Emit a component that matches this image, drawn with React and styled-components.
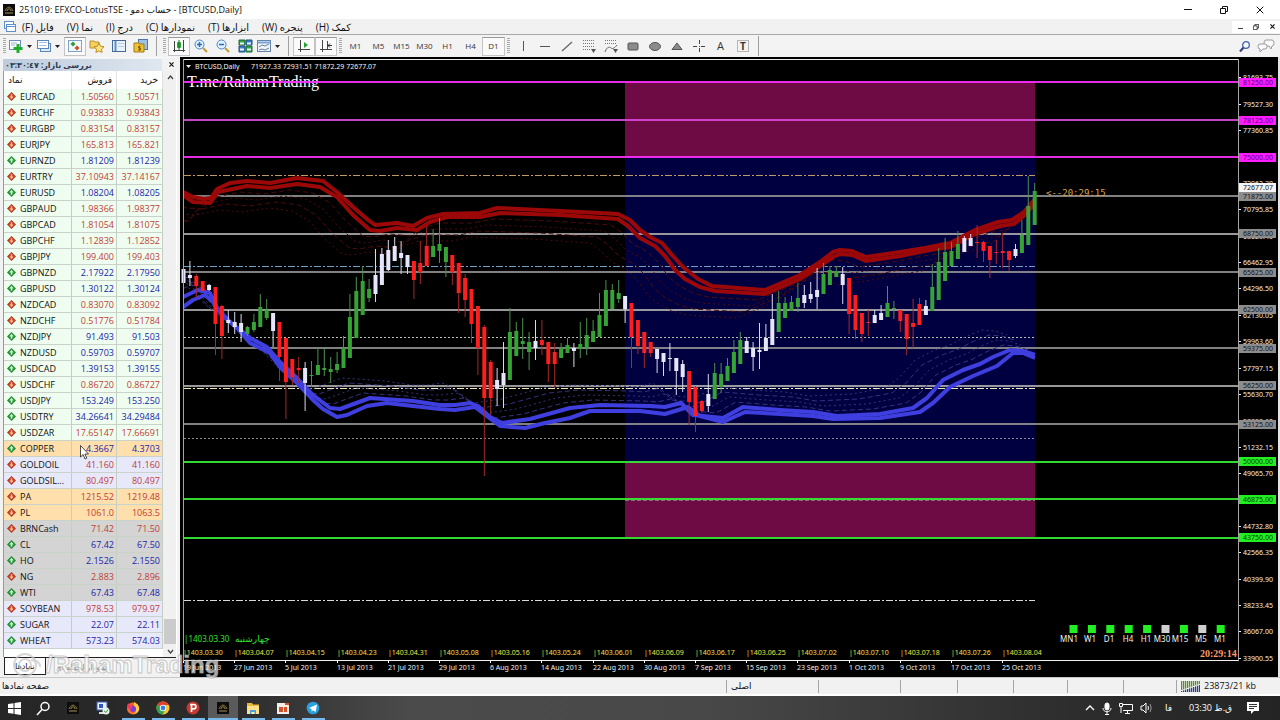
import React from "react";
import styled, { createGlobalStyle, css } from "styled-components";

const GlobalStyle = createGlobalStyle`
  *, *::before, *::after { box-sizing: border-box; }
  html, body { margin: 0; padding: 0; }
  body {
    font-family: "Open Sans", "DejaVu Sans", sans-serif;
    font-size: 9px;
    line-height: 12px;
    color: #111;
    background: #f0f0f0;
  }
  button { font: inherit; color: inherit; border: 0; background: none; padding: 0; margin: 0; }
  svg { display: block; flex: none; }
`;

/* ---------- window shell ---------- */
const Window = styled.div`
  position: relative;
  display: flex;
  flex-direction: column;
  min-height: 100vh;
  overflow: hidden;
`;
const TitleBar = styled.header`
  display: flex;
  align-items: center;
  justify-content: space-between;
  height: 19px;
  padding: 0 15px 0 2px;
  background: #fff;
`;
const TitleText = styled.h1`
  display: flex;
  align-items: center;
  gap: 3px;
  margin: 0;
  font-size: 9px;
  font-weight: 400;
  line-height: 14px;
  white-space: pre;
`;
const WindowControls = styled.div`
  display: flex;
  gap: 26px;
`;
const ControlButton = styled.button`
  display: grid;
  place-items: center;
  width: ${(p) => (p.$small ? 16 : 10)}px;
  height: 12px;
  background: ${(p) => (p.$small ? "#fff" : "none")};
`;
const MenuBar = styled.nav`
  display: flex;
  align-items: center;
  height: 16px;
  padding: 0 0 0 3px;
  background: #f1f1f1;
  border-bottom: 1px solid #a8a8a8;
`;
const MenuIcon = styled.span`
  width: 19px;
`;
const MenuItems = styled.div`
  display: flex;
  flex: 1;
  gap: 13px;
`;
const MenuItem = styled.button`
  font-size: 10px;
  line-height: 12px;
  white-space: nowrap;
`;
const MdiControls = styled.div`
  display: flex;
`;

/* ---------- toolbar ---------- */
const ToolBar = styled.div`
  display: flex;
  align-items: center;
  height: 22px;
  padding: 0 3px 0 1px;
  background: #f3f3f3;
`;
const Grip = styled.span`
  width: 3px;
  height: 16px;
  margin: 0 2px;
  background: repeating-linear-gradient(#a9a9a9 0 1px, #f3f3f3 1px 2px);
`;
const Separator = styled.span`
  width: 1px;
  height: 20px;
  margin: 0 4px;
  background: #a0a0a0;
`;
const Tool = styled.button`
  display: flex;
  align-items: center;
  justify-content: ${(p) => (p.$menu ? "flex-start" : "center")};
  gap: 3px;
  width: ${(p) => (p.$menu ? 28 : p.$period ? 23 : 22)}px;
  height: 19px;
  font-size: 8px;
  color: #333;
  ${(p) =>
    p.$pressed &&
    css`
      background: #fafafa;
      border: 1px solid #c4c4c4;
      border-top-color: #999;
    `}
`;
const ToolSpacer = styled.span`
  flex: 1;
`;

/* ---------- market watch ---------- */
const Main = styled.main`
  display: flex;
  flex: 1;
  padding-right: 2px;
  background: #e4e4e4;
`;
const Watch = styled.aside`
  display: flex;
  flex-direction: column;
  flex: none;
  width: 180px;
  padding: 0 3px;
  background: #f2f2f2;
`;
const WatchHeader = styled.div`
  display: flex;
  align-items: center;
  justify-content: space-between;
  height: 14px;
  padding: 0 1px 0 2px;
  border-top: 1px solid #f8f8f8;
`;
const WatchTitle = styled.h2`
  flex: 1;
  margin: 0 4px 0 -2px;
  padding: 0 2px;
  font-size: 8px;
  font-weight: 700;
  line-height: 12px;
  text-align: left;
  color: #2b3a4c;
  background: linear-gradient(90deg, #bccbdd, #dfe7f0);
`;
const WatchBody = styled.div`
  display: flex;
  flex: 1;
  background: #fff;
  border-left: 1px solid #999;
`;
const Quotes = styled.table`
  flex: none;
  align-self: flex-start;
  width: 159px;
  table-layout: fixed;
  border-collapse: separate;
  border-spacing: 0;
`;
const HeadCell = styled.th`
  height: 18px;
  padding: 0 4px;
  font-size: 9px;
  font-weight: 400;
  line-height: 12px;
  text-align: ${(p) => (p.$symbol ? "left" : "right")};
  border-right: 1px solid #e2e2e2;
  background: #fff;
`;
const QuoteRow = styled.tr`
  background: ${(p) => p.$tint};
`;
const SymbolCell = styled.th`
  height: 16px;
  padding: 0 0 0 3px;
  font-weight: 400;
  line-height: 15px;
  text-align: left;
  white-space: nowrap;
  border-right: 1px solid #c4cfc4;
  border-bottom: 1px solid #c9d3c9;
`;
const SymbolName = styled.span`
  display: flex;
  align-items: center;
  gap: 4px;
`;
const PriceCell = styled.td`
  height: 16px;
  padding: 0 2px 0 0;
  line-height: 15px;
  text-align: right;
  color: ${(p) => (p.$up ? "#2323a8" : "#bf3d37")};
  border-right: 1px solid #c4cfc4;
  border-bottom: 1px solid #c9d3c9;
`;
const ScrollBar = styled.div`
  display: flex;
  flex-direction: column;
  align-items: center;
  flex: 1;
  padding: 4px 0 3px;
  background: linear-gradient(90deg, #f0f0f0 0 13px, #fff 13px);
`;
const ScrollTrack = styled.div`
  display: flex;
  flex: 1;
  flex-direction: column;
  justify-content: flex-end;
  width: 12px;
  padding-bottom: 5px;
`;
const ScrollThumb = styled.div`
  height: 25px;
  background: #cbcbcb;
`;
const Tabs = styled.div`
  display: flex;
  height: 19px;
  margin: 0 1px 1px;
  border-top: 1px solid #222;
`;
const Tab = styled.button`
  height: 17px;
  padding: 0 10px;
  font-size: 8px;
  color: ${(p) => (p.$active ? "#111" : "#888")};
  ${(p) =>
    p.$active &&
    css`
      background: #fff;
      border: 1px solid #222;
      border-top: 0;
    `}
`;

/* ---------- chart ---------- */
const Chart = styled.section`
  display: flex;
  flex: 1;
  min-width: 0;
  background: #000;
`;
const Plot = styled.svg`
  flex: 1;
  min-width: 0;
  height: 620px;
  font-family: "Noto Sans", "DejaVu Sans", sans-serif;
`;
const PriceAxis = styled.svg`
  width: 40px;
  height: 620px;
  font-family: "Noto Sans", sans-serif;
  font-size: 7px;
`;

/* ---------- status bar and taskbar ---------- */
const StatusBar = styled.footer`
  display: flex;
  align-items: center;
  height: 19px;
  padding-left: 2px;
  background: #f1f1f1;
  border-top: 1px solid #c8c8c8;
  border-bottom: 2px solid #fff;
`;
const StatusMain = styled.span`
  flex: 1;
`;
const StatusCell = styled.span`
  display: flex;
  align-items: center;
  gap: 4px;
  width: ${(p) => p.$width}px;
  height: 13px;
  padding-left: 4px;
  border-left: 1px solid #a5a5a5;
`;
const TaskBar = styled.footer`
  display: flex;
  justify-content: space-between;
  height: 24px;
  background: linear-gradient(90deg, #262626, #2b2b2b 18%, #4b4b4b 32%, #484848 55%, #2c2c2c 85%, #242424);
`;
const TaskApps = styled.div`
  display: flex;
`;
const TaskButton = styled.button`
  display: grid;
  place-items: center;
  width: ${(p) => (p.$start ? 28 : 30)}px;
  height: 24px;
  background: ${(p) => (p.$active ? "#5a5a5a" : "none")};
  ${(p) =>
    p.$open &&
    css`
      background-image: linear-gradient(#76b9ed, #76b9ed);
      background-size: ${p.$active ? 30 : 23}px 2px;
      background-position: center bottom;
      background-repeat: no-repeat;
    `}
`;
const Tray = styled.div`
  display: flex;
  align-items: center;
  gap: 7px;
  padding-right: 20px;
  color: #fff;
`;
const TrayText = styled.span`
  padding: 0 ${(p) => (p.$wide ? 7 : 5)}px 0 5px;
  white-space: nowrap;
`;

/* ---------- overlays ---------- */
const Watermark = styled.div`
  position: absolute;
  left: 10px;
  top: 650px;
  display: flex;
  align-items: center;
  font: 700 24px/30px "Liberation Sans", sans-serif;
  color: rgba(255, 255, 255, 0.66);
  -webkit-text-stroke: 1px rgba(165, 165, 165, 0.6);
  pointer-events: none;
`;
const Pointer = styled.div`
  position: absolute;
  left: 80px;
  top: 445px;
  pointer-events: none;
`;

/* ---------- data ---------- */
const FX = "#effdf0";
const METAL = "#ffdfac";
const GOLD = "#e8e8fb";
const ENERGY = "#d4d4d4";

const quotes = [
  ["EURCAD", "1.50560", "1.50571", 0, FX],
  ["EURCHF", "0.93833", "0.93843", 0, FX],
  ["EURGBP", "0.83154", "0.83157", 0, FX],
  ["EURJPY", "165.813", "165.821", 0, FX],
  ["EURNZD", "1.81209", "1.81239", 1, FX],
  ["EURTRY", "37.10943", "37.14167", 0, FX],
  ["EURUSD", "1.08204", "1.08205", 1, FX],
  ["GBPAUD", "1.98366", "1.98377", 0, FX],
  ["GBPCAD", "1.81054", "1.81075", 0, FX],
  ["GBPCHF", "1.12839", "1.12852", 0, FX],
  ["GBPJPY", "199.400", "199.403", 0, FX],
  ["GBPNZD", "2.17922", "2.17950", 1, FX],
  ["GBPUSD", "1.30122", "1.30124", 1, FX],
  ["NZDCAD", "0.83070", "0.83092", 0, FX],
  ["NZDCHF", "0.51776", "0.51784", 0, FX],
  ["NZDJPY", "91.493", "91.503", 1, FX],
  ["NZDUSD", "0.59703", "0.59707", 1, FX],
  ["USDCAD", "1.39153", "1.39155", 1, FX],
  ["USDCHF", "0.86720", "0.86727", 0, FX],
  ["USDJPY", "153.249", "153.250", 1, FX],
  ["USDTRY", "34.26641", "34.29484", 1, FX],
  ["USDZAR", "17.65147", "17.66691", 0, FX],
  ["COPPER", "4.3667", "4.3703", 1, METAL],
  ["GOLDOIL", "41.160", "41.160", 0, GOLD],
  ["GOLDSIL...", "80.497", "80.497", 0, GOLD],
  ["PA", "1215.52", "1219.48", 0, METAL],
  ["PL", "1061.0", "1063.5", 0, METAL],
  ["BRNCash", "71.42", "71.50", 0, ENERGY],
  ["CL", "67.42", "67.50", 1, ENERGY],
  ["HO", "2.1526", "2.1550", 1, ENERGY],
  ["NG", "2.883", "2.896", 0, ENERGY],
  ["WTI", "67.43", "67.48", 1, ENERGY],
  ["SOYBEAN", "978.53", "979.97", 0, GOLD],
  ["SUGAR", "22.07", "22.11", 1, GOLD],
  ["WHEAT", "573.23", "574.03", 1, GOLD],
];

/* kind, high, body top, body bottom, low */
const candles = `
W269,269,283,288 W261,275,278,286 R274,276,286,298 R281,281,291,291 W284,285,290,291 R287,287,324,355
R305,306,336,359 W310,320,323,333 W312,322,327,334 W314,323,332,342 G326,327,334,336 G314,322,330,332
G294,307,327,327 G299,310,318,320 W313,313,331,347 R322,322,357,381 R338,338,382,419 R359,359,377,385
R357,368,370,383 W362,368,383,411 G361,375,376,387 G348,365,375,375 G348,368,370,376 G357,369,372,383
G352,364,370,373 G336,348,368,368 G294,317,358,358 G277,291,338,338 G266,281,315,315 G279,289,298,302
W249,275,294,302 W248,254,285,285 W240,250,270,271 W237,246,261,261 W241,253,258,274 W255,255,267,274
R261,261,280,299 R241,263,272,284 R226,246,266,266 G229,246,257,257 G218,244,251,263 G247,247,262,277
R255,255,272,285 R263,263,293,313 R274,278,300,317 R289,289,324,343 R306,306,348,375 R325,327,398,476
R360,362,398,415 W368,380,389,406 W342,373,385,408 G308,332,380,380 G322,331,356,356 G318,341,344,359
G332,342,352,370 W320,341,348,360 R320,340,345,355 R342,342,364,382 R343,352,364,388 G343,348,358,358
G338,345,353,353 W343,348,351,367 G322,344,349,358 G318,335,348,355 G320,331,342,342 G293,315,337,337
G280,290,326,326 G284,290,309,309 G280,293,299,303 W296,296,309,323 R303,303,337,368 R320,320,346,354
R332,332,353,368 R342,342,353,357 W349,349,359,373 W353,353,362,376 W343,358,359,371 W358,358,371,395
W360,364,377,392 R371,371,402,425 R386,387,416,432 R400,401,411,413 W374,394,406,412 G363,373,399,399
G363,374,387,393 G358,366,381,381 G340,352,373,373 G332,340,364,364 W337,341,353,353 W342,348,357,371
W323,350,352,369 W324,338,351,351 W294,319,345,345 G291,303,332,332 G297,303,318,318 G296,302,311,311
G283,298,307,312 W285,295,303,308 W282,294,299,303 W268,290,297,309 G263,274,294,294 G266,270,285,285
G266,271,277,277 W267,274,285,304 R278,278,314,334 R295,295,330,339 R313,313,334,342 R310,322,323,336
W310,315,323,323 W305,313,320,320 G286,303,317,317 G301,308,309,319 R310,310,321,332 R314,314,339,355
R299,323,327,348 R298,304,325,325 W300,306,315,315 G264,287,311,311 G248,262,300,300 G238,252,281,281
G242,251,266,266 G231,244,259,259 W236,238,252,252 W234,238,246,246 R225,242,243,258 R241,242,251,262
R246,246,260,278 R240,252,253,264 R233,251,253,268 R251,251,260,271 W244,249,256,258 G220,235,253,253
G176,206,245,245 G183,191,225,225`
  .trim()
  .split(/\s+/)
  .map((item) => [item[0], ...item.slice(1).split(",").map(Number)]);
const candleFill = { W: "#e6e6fa", R: "#fb1f1f", G: "#37a337" };
const wickFill = { W: "#d8d8ee", R: "#a52a2a", G: "#4f8f4f" };

const redUpper =
  "183,192 193,197 204,199 211,198 217,189 230,183 247,181 270,183 297,178 323,181 337,192 353,207 367,219 375,225 397,223 413,226 427,218 443,214 480,213 497,208 540,210 600,213 618,214 630,220 640,230 650,237 662,243 672,255 683,267 698,279 712,286 765,290 800,275 820,262 833,252 840,250 852,251 866,257 900,252 925,248 950,243 975,230 998,222 1012,220 1024,212 1034,200";
const redLower =
  "183,195 193,202 210,203 218,192 247,186 270,188 297,184 320,187 337,197 353,215 370,230 380,231 397,228 417,230 430,222 447,217 480,217 500,213 560,215 618,219 628,226 640,238 655,246 665,256 675,270 685,279 700,287 715,291 765,294 800,279 820,266 833,257 840,254 852,255 866,261 900,256 930,250 950,247 975,234 1000,226 1014,224 1026,214 1034,204";
const blueUpper =
  "183,297 198,290 210,293 217,308 230,322 250,338 267,347 280,362 297,378 313,395 330,408 340,409 370,398 413,401 440,405 455,405 470,403 478,406 490,417 502,423 530,419 570,408 600,405 650,406 665,407 681,403 693,415 723,418 743,407 780,410 813,412 837,416 880,414 913,408 927,398 943,380 963,370 980,364 993,357 1010,350 1023,351 1035,355";
const blueLower =
  "183,307 193,300 205,295 213,302 222,315 237,328 250,343 270,353 280,367 297,383 313,400 323,409 337,417 347,415 367,406 387,403 413,406 440,409 455,410 475,407 484,414 500,426 525,428 545,423 570,418 590,411 640,411 665,414 688,407 700,416 723,422 745,412 780,414 813,416 833,419 880,418 920,412 933,403 950,387 973,376 997,366 1013,353 1023,353 1035,358";

const levels = [
  [82, "#ff30ff"], [120, "#d848d8"], [157, "#ff30ff"],
  [196, "#8f8f8f"], [234, "#a8a8a8"], [272, "#8f8f8f"], [310, "#a8a8a8"], [348, "#8f8f8f"], [386, "#a8a8a8"], [424, "#8f8f8f"],
  [462, "#35f035"], [499, "#35f035"], [538, "#35f035"],
];
const dashes = [
  [176, "#c09a60", "7 2 2 2"],
  [267, "#6f9fc4", "7 2 2 2"],
  [338, "#b9c2ae", "2 2"],
  [389, "#efe9b8", "7 2 2 2"],
  [439, "#8b8b94", "2 2"],
  [501, "#8a6a78", "4 2"],
  [601, "#d8d8d8", "7 2 2 2"],
];
const prices = [
  [77, "81693.75"], [104, "79527.30"], [130, "77360.85"], [183, "72962.30"], [209, "70795.85"], [236, "68629.40"],
  [262, "66462.95"], [288, "64296.50"], [315, "62130.05"], [341, "59963.60"], [368, "57797.15"], [394, "55630.70"],
  [421, "53398.60"], [447, "51232.15"], [473, "49065.70"], [526, "44732.80"], [552, "42566.35"], [579, "40399.90"],
  [605, "38233.45"], [631, "36067.00"], [658, "33900.55"],
];
const priceTags = [
  [82, "81250.00", "#ff1cff", "#6a006a"], [120, "78125.00", "#ff1cff", "#6a006a"], [157, "75000.00", "#ff1cff", "#6a006a"],
  [196, "71875.00", "#8c8c8c", "#111"], [187, "72677.07", "#f4f4f4", "#111"], [233, "68750.00", "#8c8c8c", "#111"],
  [272, "65625.00", "#8c8c8c", "#111"], [309, "62500.00", "#8c8c8c", "#111"], [348, "59375.00", "#8c8c8c", "#111"],
  [385, "56250.00", "#8c8c8c", "#111"], [424, "53125.00", "#8c8c8c", "#111"], [461, "50000.00", "#22ee22", "#063f06"],
  [499, "46875.00", "#22ee22", "#063f06"], [537, "43750.00", "#22ee22", "#063f06"],
];
const dates = [
  ["1403.03.30", "19 Jun 2013"], ["1403.04.07", "27 Jun 2013"], ["1403.04.15", "5 Jul 2013"], ["1403.04.23", "13 Jul 2013"],
  ["1403.04.31", "21 Jul 2013"], ["1403.05.08", "29 Jul 2013"], ["1403.05.16", "6 Aug 2013"], ["1403.05.24", "14 Aug 2013"],
  ["1403.06.01", "22 Aug 2013"], ["1403.06.09", "30 Aug 2013"], ["1403.06.17", "7 Sep 2013"], ["1403.06.25", "15 Sep 2013"],
  ["1403.07.02", "23 Sep 2013"], ["1403.07.10", "1 Oct 2013"], ["1403.07.18", "9 Oct 2013"], ["1403.07.26", "17 Oct 2013"],
  ["1403.08.04", "25 Oct 2013"],
];
const frames = [
  ["MN1", -169, 1], ["W1", -148, 1], ["D1", -129, 1], ["H4", -110, 1], ["H1", -92, 1], ["M30", -76, 0], ["M15", -58, 1],
  ["M5", -37, 0], ["M1", -18, 1],
];

/* ---------- icons ---------- */
const AppMark = ({ size = 14 }) => (
  <svg width={size} height={size} viewBox="0 0 14 14">
    <rect x="1" y="1" width="12" height="12" fill="#0c0c0c" />
    <path d="M3 8c1-3 2-3 4-4 2 1 3 1 4 4" fill="none" stroke="#8d7a3c" />
    <path d="M5 8c0-2 1-2 2-2s2 0 2 2M3 10h8" fill="none" stroke="#a8924c" />
  </svg>
);
const Arrow = ({ up }) => (
  <svg width="9" height="9" viewBox="0 0 8 8">
    <path d="M4 0l4 4-4 4-4-4z" fill={up ? "#1f8f33" : "#b83a22"} />
    <path d={up ? "M4 1.500L6 4H4.700V6H3.300V4H2z" : "M4 6.500L2 4H3.300V2H4.700V4H6z"} fill={up ? "#c9f2cd" : "#ffb98a"} />
  </svg>
);
const Icon = ({ children }) => (
  <svg width="16" height="16" viewBox="0 0 16 16" fill="none">
    {children}
  </svg>
);
const Caret = () => (
  <svg width="5" height="3" viewBox="0 0 5 3"><path d="M0 0h5L2.500 3z" fill="#222" /></svg>
);
const icons = {
  newChart: (
    <Icon>
      <rect x="1.500" y="2.500" width="11" height="9" fill="#fff" stroke="#6f8fb8" />
      <path d="M3 5h6M3 7h4" stroke="#9bb3cc" />
      <path d="M10 6v9M5.500 10.500h9" stroke="#1fae2b" strokeWidth="3" />
    </Icon>
  ),
  profiles: (
    <Icon>
      <rect x="4.500" y="5.500" width="10" height="8" fill="#dcebfa" stroke="#5b86b8" />
      <rect x="1.500" y="2.500" width="11" height="8" fill="#fff" stroke="#5b86b8" />
      <path d="M3 4.500h8M3 7.500h7" stroke="#9fc0e2" />
    </Icon>
  ),
  watch: (
    <Icon>
      <rect x="1.500" y="2.500" width="13" height="11" fill="#f3f8fd" stroke="#7fa3cb" />
      <path d="M6 3.500l2.500 2.500L6 8.500 3.500 6z" fill="#2e9b3a" />
      <path d="M10 7.500l2.500 2.500-2.500 2.500L7.500 10z" fill="#c9532b" />
    </Icon>
  ),
  navigator: (
    <Icon>
      <path d="M1 3h4l1 1h4v6H1z" fill="#f4cf62" stroke="#b98f22" />
      <path d="M10 5l1.600 3.200 3.400.5-2.500 2.400.6 3.400-3.100-1.600-3.100 1.600.6-3.400L5 8.700l3.400-.5z" fill="#ffe27a" stroke="#b98f22" />
    </Icon>
  ),
  data: (
    <Icon>
      <rect x="1.500" y="2.500" width="13" height="11" fill="#eaf3fb" stroke="#456a96" />
      <path d="M4.500 3v10" stroke="#5c8ec6" strokeWidth="2" />
      <path d="M7 5.500h6M7 8.500h6" stroke="#b7cde3" />
    </Icon>
  ),
  tester: (
    <Icon>
      <rect x="5.500" y="1.500" width="9" height="10" fill="#9cc1e6" stroke="#4d76a3" />
      <path d="M1 5h5l1 1h4v8H1z" fill="#f0c136" stroke="#9d7a14" />
      <path d="M7.500 8.500H5.500v1.500h2v2h-2.500M6.500 7.500v5.500" stroke="#8a6405" />
    </Icon>
  ),
  bars: (
    <Icon>
      <path d="M3.500 3v11M2 12.500h12M12.500 2v12" stroke="#444" />
      <rect x="6" y="4" width="4" height="6" rx="1" fill="#25a934" />
      <path d="M8 2v10" stroke="#147a20" />
    </Icon>
  ),
  zoomIn: (
    <Icon>
      <path d="M10 10l4 4" stroke="#c59a2d" strokeWidth="2" />
      <circle cx="6.500" cy="6.500" r="4.500" fill="#e2f1ff" stroke="#4b86c4" />
      <path d="M4 6.500h5M6.500 4v5" stroke="#2b6bb0" strokeWidth="1.500" />
    </Icon>
  ),
  zoomOut: (
    <Icon>
      <path d="M10 10l4 4" stroke="#c59a2d" strokeWidth="2" />
      <circle cx="6.500" cy="6.500" r="4.500" fill="#e2f1ff" stroke="#4b86c4" />
      <path d="M4 6.500h5" stroke="#2b6bb0" strokeWidth="1.500" />
    </Icon>
  ),
  tile: (
    <Icon>
      <path d="M2 2h6v5H2zM9 8h6v6H9z" fill="#37a34a" stroke="#1a6a2c" />
      <path d="M9 2h6v5H9zM2 8h6v6H2z" fill="#3f7fc0" stroke="#1f4d80" />
      <path d="M3 5.500h4M10 5.500h4M3 11.500h4M10 11.500h4" stroke="#e7f3ff" strokeWidth="2" />
    </Icon>
  ),
  template: (
    <Icon>
      <rect x="1.500" y="2.500" width="13" height="11" fill="#eef4fa" stroke="#6386ad" />
      <path d="M2 4.500h12" stroke="#7ba4d0" strokeWidth="2" />
      <path d="M3 9l3-2 3 1 4-2M3 12l3-1 3 1 4-2" stroke="#6d8091" />
    </Icon>
  ),
  scroll: (
    <Icon>
      <path d="M4.500 2v12M2 11.500h12" stroke="#444" />
      <path d="M8 4l4 3-4 3z" fill="#27a135" />
    </Icon>
  ),
  shift: (
    <Icon>
      <path d="M4.500 2v12M2 11.500h12M9.500 3v8" stroke="#444" />
      <path d="M14 7.500H10M10 7.500l2-2M10 7.500l2 2" stroke="#333" />
    </Icon>
  ),
  vline: <Icon><path d="M8.500 3v10" stroke="#555" /></Icon>,
  hline: <Icon><path d="M3 8.500h10" stroke="#555" /></Icon>,
  trend: <Icon><path d="M3 13L13 4" stroke="#666" strokeWidth="1.300" /></Icon>,
  fibo: (
    <Icon>
      <path d="M2 2.500h12M2 5.500h12M2 8.500h12M2 11.500h8" stroke="#777" strokeDasharray="1 1" />
      <path d="M10 11h5l-2.500 4z" fill="#555" />
    </Icon>
  ),
  fiboArc: (
    <Icon>
      <path d="M2 2.500h12M2 5.500h12" stroke="#777" strokeDasharray="1 1" />
      <path d="M2 14c2-6 5-5 6-4s3 1 6-3" stroke="#666" />
      <path d="M10 11h5l-2.500 4z" fill="#555" />
    </Icon>
  ),
  rect: <Icon><rect x="3" y="5" width="10" height="7" rx="1" fill="#8b8b8b" stroke="#555" /></Icon>,
  ellipse: <Icon><ellipse cx="8" cy="8.500" rx="5.500" ry="4" fill="#8b8b8b" stroke="#555" /></Icon>,
  triangle: <Icon><path d="M8 5l5 6.500H3z" fill="#8b8b8b" stroke="#555" /></Icon>,
  cross: <Icon><path d="M2 8.500h4M10 8.500h4M8.500 2v4M8.500 10v4M8 8.500h1" stroke="#444" /></Icon>,
};
const drawTools = ["vline", "hline", "trend", "fibo", "fiboArc", "rect", "ellipse", "triangle", "cross"];

const Restore = ({ size }) => (
  <svg width={size} height={size} viewBox="0 0 8 8" fill="none" stroke="currentColor">
    <path d="M.500 2.500h5v5h-5zM2.500 2.500v-2h5v5h-2" />
  </svg>
);
const Cross = ({ size, bold }) => (
  <svg width={size} height={size} viewBox="0 0 8 8" stroke="currentColor" strokeWidth={bold ? 1.8 : 1}>
    <path d="M.700.700l6.600 6.600M7.300.700L.700 7.300" />
  </svg>
);

const taskApps = [
  ["Search", false, (
    <svg width="15" height="15" viewBox="0 0 15 15" fill="none" stroke="#fff" strokeWidth="1.500"><circle cx="9" cy="5.500" r="4" /><path d="M6 8.500L1 14" /></svg>
  )],
  ["MetaTrader", false, <AppMark />],
  ["Remote", false, (
    <svg width="14" height="14" viewBox="0 0 14 14"><rect x="1" y="1" width="10" height="8" fill="#e8f1ff" stroke="#3c5fb5" /><rect x="3" y="3" width="4" height="4" fill="#2d57c4" /><path d="M3 12h6" stroke="#ddd" strokeWidth="2" /><circle cx="10" cy="10" r="3.500" fill="#e9f5e9" /><path d="M8 10l2 1.500 2-3" fill="none" stroke="#3a9a3a" /></svg>
  )],
  ["Firefox", true, (
    <svg width="14" height="14" viewBox="0 0 14 14"><circle cx="7" cy="7.500" r="6" fill="#ff6a2b" /><path d="M8 1c4 2 6 5 5 8-1 3-4 4-6 4 4-2 4-6 1-8z" fill="#ffcb3a" /><circle cx="7" cy="8" r="3" fill="#7a3be0" /><path d="M1 6c0-2 1-3 1-4l2 2c2-1 4 0 4 1-2 0-3 1-2 3-3 1-4-1-5-2z" fill="#f03a5a" /></svg>
  )],
  ["Chrome", true, (
    <svg width="14" height="14" viewBox="0 0 14 14"><circle cx="7" cy="7" r="6.500" fill="#f7c52d" /><path d="M7 7L1.400 3.700A6.500 6.500 0 0 1 12.700 4H7z" fill="#e2402f" /><path d="M7 7L1.400 3.700A6.500 6.500 0 0 0 6.500 13.500L9.600 8.500z" fill="#2fa34f" /><circle cx="7" cy="7" r="3.200" fill="#fff" /><circle cx="7" cy="7" r="2.400" fill="#3d7de8" /></svg>
  )],
  ["PDF", true, (
    <svg width="14" height="14" viewBox="0 0 14 14"><circle cx="7" cy="7" r="6.500" fill="#c33a30" /><path d="M5.500 11V3.500h2.200a2.200 2.200 0 0 1 0 4.400H5.500M4 3.500h2" fill="none" stroke="#fff" strokeWidth="1.700" /></svg>
  )],
  ["Terminal", true, <AppMark />],
  ["Explorer", true, (
    <svg width="14" height="14" viewBox="0 0 14 14"><path d="M1 2h5l1 1.500h6V13H1z" fill="#e9b93c" /><path d="M1 5h12v8H1z" fill="#ffe08a" /><path d="M4 9h6v4H4z" fill="#4f9fdc" /><path d="M5.500 11h3v2h-3z" fill="#fff0b5" /></svg>
  )],
  ["Recorder", true, (
    <svg width="14" height="14" viewBox="0 0 14 14"><rect x="1" y="2" width="12" height="11" fill="#f5ede8" /><rect x="3" y="6" width="4" height="5" fill="#d5532b" /><rect x="8" y="6" width="3" height="5" fill="#d5532b" /><rect x="9" y="2" width="4" height="2" fill="#d5532b" /></svg>
  )],
  ["Telegram", true, (
    <svg width="14" height="14" viewBox="0 0 14 14"><circle cx="7" cy="7" r="6.300" fill="#2aa1de" /><path d="M3 7l8-3.500L9.600 11 7 9.200 5.700 10.500 5.500 8z" fill="#fff" /></svg>
  )],
];

const toY = (y) => y - 57;

function Band({ points, color, dim, shift }) {
  return (
    <>
      {[1, 2, 3, 4].map((n) => (
        <polyline
          key={n}
          points={points[shift > 0 ? 1 : 0]}
          transform={`translate(${n * -7} ${n * shift})`}
          fill="none"
          stroke={dim}
          strokeDasharray={n % 2 ? "5 3" : "2 3"}
        />
      ))}
      {points.map((line) => (
        <polyline key={line} points={line} fill="none" stroke={color} strokeWidth="4" strokeLinejoin="round" />
      ))}
    </>
  );
}

function ChartPlot() {
  return (
    <Plot role="img" aria-label="BTCUSD daily chart">
      <defs>
        <clipPath id="history"><rect x="183" y="60" width="853" height="600" /></clipPath>
      </defs>
      <text x="7" y={toY(87)} fill="#fff" fontSize="16" fontFamily="Liberation Serif, serif">T.me/RahamTrading</text>
      <g transform="translate(-180 -57)">
        <rect x="625" y="82" width="410" height="75" fill="#6e0a44" />
        <rect x="625" y="157" width="410" height="305" fill="#000040" />
        <rect x="625" y="462" width="410" height="75" fill="#6e0a44" />
        {dashes.map(([y, color, dash]) => (
          <line key={y} x1={y === 501 ? 625 : 184} x2="1035" y1={y - 0.5} y2={y - 0.5} stroke={color} strokeDasharray={dash} />
        ))}
      </g>
      {levels.map(([y, color]) => (
        <line key={y} x1="3" x2="100%" y1={toY(y)} y2={toY(y)} stroke={color} strokeWidth="2" strokeOpacity="0.9" />
      ))}
      <g transform="translate(-180 -57)">
        <g clipPath="url(#history)">
          <Band points={[redUpper, redLower]} color="#9c0808" dim="#4c0c0c" shift={6} />
          <Band points={[blueUpper, blueLower]} color="#3f3fe0" dim="#33337f" shift={-5} />
        </g>
        {candles.map(([kind, high, top, bottom, low], i) => {
          const x = 183.5 + i * 6.4;
          return (
            <g key={i}>
              <rect x={x - 0.5} y={high} width="1" height={low - high} fill={wickFill[kind]} />
              <rect x={x - 2} y={top} width="4" height={bottom - top} fill={candleFill[kind]} />
            </g>
          );
        })}
        <g fontSize="7" fill="#f2f2f2">
          <path d="M186 65h5l-2.500 3z" />
          <text x="195" y="69">BTCUSD,Daily</text>
          <text x="251" y="69">71927.33 72931.51 71872.29 72677.07</text>
        </g>
        <text x="1046" y="196" fill="#d8a24a" fontSize="9" fontFamily="DejaVu Sans Mono, monospace">{"<--20:29:15"}</text>
        <g fill="#2fe02f">
          <text x="184" y="642" fontSize="8">|1403.03.30</text>
          <text x="235" y="642" fontSize="9">چهارشنبه</text>
        </g>
        {dates.map(([jalali, gregorian], i) => {
          const x = 183 + Math.round(i * 51.2);
          return (
            <g key={jalali} fontSize="7">
              <text x={x} y="655" fill="#f2e24a">|{jalali}</text>
              <rect x={x} y="660" width="1" height="3" fill="#fff" />
              <text x={x} y="670" fill="#f2f2f2">{gregorian}</text>
            </g>
          );
        })}
      </g>
      <svg x="100%" overflow="visible">
        {frames.map(([label, x, on], i) => (
          <g key={label}>
            <rect x={i * 18.4 - 168.500} y={toY(625)} width="8" height="8" fill={on ? "#23f023" : "#cfcfcf"} />
            <text x={x} y={toY(642)} fontSize="8" fill="#f2f2f2" textAnchor="middle">{label}</text>
          </g>
        ))}
        <text x="-38" y={toY(657)} fill="#ff9a6a" fontSize="10" fontWeight="700" fontFamily="Liberation Serif, serif">20:29:14</text>
      </svg>
      <rect x="3" y="2" width="100%" height="1" fill="#e8e8e8" />
      <rect x="3" y="603" width="100%" height="1" fill="#f2f2f2" />
      <rect x="3" y="2" width="1" height="602" fill="#a5a5a5" />
    </Plot>
  );
}

function ChartAxis() {
  return (
    <PriceAxis role="img" aria-label="Price axis">
      <rect x="0" y="2" width="1" height="602" fill="#a5a5a5" />
      {prices.map(([y, label]) => (
        <g key={label} fill="#f2f2f2">
          <rect x="1" y={toY(y)} width="2" height="1" />
          <text x="5" y={toY(y + 3)}>{label}</text>
        </g>
      ))}
      {priceTags.map(([y, label, fill, ink]) => (
        <g key={label}>
          <rect x="1" y={toY(y - 4)} width="37" height="9" fill={fill} />
          <text x="5" y={toY(y + 3)} fill={ink}>{label}</text>
        </g>
      ))}
    </PriceAxis>
  );
}

function MarketWatch() {
  return (
    <Watch>
      <WatchHeader>
        <WatchTitle dir="rtl">بررسی بازار: ٠٣:٣٠:٤٧</WatchTitle>
        <ControlButton aria-label="Close panel"><Cross size={5} bold /></ControlButton>
      </WatchHeader>
      <WatchBody>
        <Quotes>
          <colgroup><col width="68" /><col width="45" /><col width="46" /></colgroup>
          <thead>
            <tr>
              <HeadCell $symbol>نماد</HeadCell>
              <HeadCell>فروش</HeadCell>
              <HeadCell>خرید</HeadCell>
            </tr>
          </thead>
          <tbody>
            {quotes.map(([name, bid, ask, up, tint]) => (
              <QuoteRow key={name} $tint={tint}>
                <SymbolCell><SymbolName><Arrow up={up} />{name}</SymbolName></SymbolCell>
                <PriceCell $up={up}>{bid}</PriceCell>
                <PriceCell $up={up}>{ask}</PriceCell>
              </QuoteRow>
            ))}
          </tbody>
        </Quotes>
        <ScrollBar>
          <svg width="7" height="5" viewBox="0 0 7 5" fill="none" stroke="#444" strokeWidth="1.300"><path d="M1 4l2.500-3L6 4" /></svg>
          <ScrollTrack><ScrollThumb /></ScrollTrack>
          <svg width="7" height="5" viewBox="0 0 7 5" fill="none" stroke="#444" strokeWidth="1.300"><path d="M1 1l2.500 3L6 1" /></svg>
        </ScrollBar>
      </WatchBody>
      <Tabs>
        <Tab $active>نمادها</Tab>
        <Tab>نمودار لحظه ای</Tab>
      </Tabs>
    </Watch>
  );
}

export default function App() {
  return (
    <Window>
      <GlobalStyle />
      <TitleBar>
        <TitleText>
          <AppMark />
          <span>251019: EFXCO-LotusTSE - حساب دمو - [BTCUSD,Daily]</span>
        </TitleText>
        <WindowControls>
          <ControlButton aria-label="Minimize"><svg width="8" height="1"><rect width="8" height="1" fill="#111" /></svg></ControlButton>
          <ControlButton aria-label="Restore"><Restore size={8} /></ControlButton>
          <ControlButton aria-label="Close"><Cross size={8} /></ControlButton>
        </WindowControls>
      </TitleBar>
      <MenuBar>
        <MenuIcon>
          <svg width="14" height="12" viewBox="0 0 14 12" fill="#fff" stroke="#5d8fcb"><rect x="1.500" y=".5" width="9" height="7" /><rect x="3.500" y="3.500" width="9" height="7" /><path d="M3.500 5.500h9" /></svg>
        </MenuIcon>
        <MenuItems>
          {["فایل (F)", "نما (V)", "درج (I)", "نمودارها (C)", "ابزارها (T)", "پنجره (W)", "کمک (H)"].map((label) => (
            <MenuItem key={label} dir="rtl">{label}</MenuItem>
          ))}
        </MenuItems>
        <MdiControls>
          <ControlButton $small aria-label="Minimize chart"><svg width="5" height="4"><rect y="3" width="5" height="1" fill="#444" /></svg></ControlButton>
          <ControlButton $small aria-label="Restore chart"><Restore size={6} /></ControlButton>
          <ControlButton $small aria-label="Close chart"><Cross size={5} bold /></ControlButton>
        </MdiControls>
      </MenuBar>
      <ToolBar>
        <Grip />
        <Tool $menu aria-label="New chart">{icons.newChart}<Caret /></Tool>
        <Tool $menu aria-label="Profiles">{icons.profiles}<Caret /></Tool>
        <Tool $pressed aria-label="Market watch">{icons.watch}</Tool>
        <Tool aria-label="Navigator">{icons.navigator}</Tool>
        <Tool aria-label="Data window">{icons.data}</Tool>
        <Tool aria-label="Tester">{icons.tester}</Tool>
        <Separator />
        <Grip />
        <Tool $pressed aria-label="Candles">{icons.bars}</Tool>
        <Tool aria-label="Zoom in">{icons.zoomIn}</Tool>
        <Tool aria-label="Zoom out">{icons.zoomOut}</Tool>
        <Tool aria-label="Tile windows">{icons.tile}</Tool>
        <Tool $menu aria-label="Templates">{icons.template}<Caret /></Tool>
        <Separator />
        <Tool $pressed aria-label="Auto scroll">{icons.scroll}</Tool>
        <Tool $pressed aria-label="Chart shift">{icons.shift}</Tool>
        <Grip />
        {["M1", "M5", "M15", "M30", "H1", "H4", "D1"].map((period) => (
          <Tool key={period} $period $pressed={period === "D1"}>{period}</Tool>
        ))}
        <Grip />
        {drawTools.map((name) => (
          <Tool key={name} aria-label={name}>{icons[name]}</Tool>
        ))}
        <Tool aria-label="Text"><Icon><text x="4" y="12" fontSize="11" fill="#333">A</text></Icon></Tool>
        <Tool aria-label="Label"><Icon><rect x="2.500" y="2.500" width="11" height="11" stroke="#777" strokeDasharray="1 1" /><text x="5" y="12" fontSize="10" fontWeight="700" fill="#333">T</text></Icon></Tool>
        <Separator />
        <ToolSpacer />
        <Tool aria-label="Search">
          <svg width="13" height="13" viewBox="0 0 13 13" fill="none"><path d="M6 7l-4 4.500" stroke="#33447e" strokeWidth="2.200" /><circle cx="8" cy="5" r="3.300" fill="#f4f8ff" stroke="#4862a8" strokeWidth="1.300" /></svg>
        </Tool>
        <Tool aria-label="Chat">
          <svg width="18" height="14" viewBox="0 0 18 14" fill="#fafafa" stroke="#9a9a9a"><path d="M9 1h6q2 0 2 3t-2 3l-1 3-2-3H9q-2 0-2-3t2-3z" /><path d="M3 5h5q2 0 2 2.500T8 10H6l-3 3V10q-2 0-2-2.500T3 5z" /></svg>
        </Tool>
      </ToolBar>
      <Main>
        <MarketWatch />
        <Chart>
          <ChartPlot />
          <ChartAxis />
        </Chart>
      </Main>
      <StatusBar>
        <StatusMain>صفحه نمادها</StatusMain>
        <StatusCell $width={92}>اصلی</StatusCell>
        <StatusCell $width={82} />
        <StatusCell $width={57} />
        <StatusCell $width={56} />
        <StatusCell $width={54} />
        <StatusCell $width={56} />
        <StatusCell $width={53} />
        <StatusCell $width={104}>
          <svg width="19" height="11" viewBox="0 0 19 11">
            {[0, 2, 4, 6, 8, 10, 12, 14, 16, 18].map((x, i) => (
              <g key={x}><rect x={x} y="0" width="1.300" height={9 - i / 1.5} fill="#5d8a2c" /><rect x={x} y={10 - i / 1.5} width="1.300" height={1 + i / 1.5} fill="#24418a" /></g>
            ))}
          </svg>
          23873/21 kb
        </StatusCell>
      </StatusBar>
      <TaskBar>
        <TaskApps>
          <TaskButton $start aria-label="Start">
            <svg width="13" height="13" viewBox="0 0 13 13" fill="#fff"><path d="M0 2l5.500-.8V6H0zM6.500 1L13 0v6H6.500zM0 7h5.500v4.800L0 11zM6.500 7H13v6l-6.500-1z" /></svg>
          </TaskButton>
          {taskApps.map(([name, open, icon]) => (
            <TaskButton key={name} aria-label={name} $open={open} $active={name === "Terminal"}>{icon}</TaskButton>
          ))}
        </TaskApps>
        <Tray>
          <svg width="10" height="6" viewBox="0 0 10 6" fill="none" stroke="#fff" strokeWidth="1.300"><path d="M1 5l4-4 4 4" /></svg>
          <svg width="10" height="13" viewBox="0 0 10 13" fill="none" stroke="#fff"><rect x="3" y="1" width="4" height="7" rx="2" fill="#fff" /><path d="M1 6c0 5 8 5 8 0M5 10v2M3 12.500h4" /></svg>
          <svg width="14" height="12" viewBox="0 0 14 12" fill="none" stroke="#fff"><path d="M4 2.500h9.500v6H4M8.500 9v2M6 11.500h5" /><path d="M.500 1.500h3v3h-3zM2 5v6" /></svg>
          <svg width="13" height="12" viewBox="0 0 13 12" fill="none" stroke="#fff"><path d="M1 4h2l3-3v10L3 8H1z" /><path d="M8 4q1 2 0 4" /><path d="M10 2q2.500 4 0 8" stroke="#999" /></svg>
          <TrayText>فا</TrayText>
          <TrayText $wide><bdi>03:30</bdi> <bdi>ق.ظ</bdi></TrayText>
          <svg width="14" height="14" viewBox="0 0 14 14"><path d="M1 1h12v9H8l-3 3v-3H1z" fill="#fff" /><path d="M3 3.500h8M3 5.500h8M3 7.500h5" stroke="#333" /></svg>
        </Tray>
      </TaskBar>
      <Pointer>
        <svg width="9" height="15" viewBox="0 0 9 15"><path d="M.500.500v11.500l2.700-2.500 1.800 4.500 1.800-.8-1.900-4.200h3.600z" fill="#fff" stroke="#222" strokeWidth=".8" /></svg>
      </Pointer>
      <Watermark>
        <svg width="36" height="26" viewBox="0 0 36 26" fill="none" stroke="rgba(200,200,200,.75)" strokeWidth="2"><circle cx="15" cy="13" r="11" /><circle cx="15" cy="13" r="6" /><path d="M21 8c8 0 9 4 9 7" /></svg>
        /RahamTrading
      </Watermark>
    </Window>
  );
}
